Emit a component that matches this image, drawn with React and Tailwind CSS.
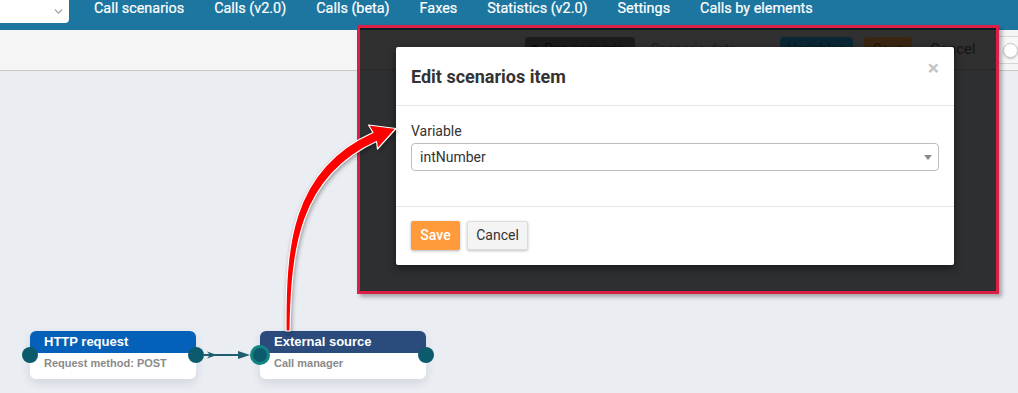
import React from "react";
import { ChevronDown } from "lucide-react";

const navItems = [
  "Call scenarios",
  "Calls (v2.0)",
  "Calls (beta)",
  "Faxes",
  "Statistics (v2.0)",
  "Settings",
  "Calls by elements",
];

const Node = ({ left, title, subtitle, headerClass, wideIn }) => (
  <div
    className="absolute top-[331px] w-[166px] h-[48px] rounded-[6px] bg-white shadow-[0_4px_10px_rgba(40,50,70,0.12)]"
    style={{ left }}
  >
    <div
      className={`h-[22px] rounded-t-[6px] pl-[14px] text-[13px] leading-[22px] font-bold text-white font-['Liberation_Sans',Arial,sans-serif] ${headerClass}`}
    >
      {title}
    </div>
    <div className="pl-[14px] pt-[3px] text-[11px] leading-[14px] font-bold text-[#8a8a8a] font-['Liberation_Sans',Arial,sans-serif]">
      {subtitle}
    </div>
    {wideIn ? (
      <div className="absolute left-[-10px] top-[14px] w-[20px] h-[20px] rounded-full bg-[#0b5b6d] border-[3px] border-[#168383]" />
    ) : (
      <div className="absolute left-[-8px] top-[16px] w-[16px] h-[16px] rounded-full bg-[#0b5b6d]" />
    )}
    <div className="absolute right-[-8px] top-[16px] w-[16px] h-[16px] rounded-full bg-[#0b5b6d]" />
  </div>
);

const App = () => {
  return (
    <div className="relative w-[1018px] h-[393px] overflow-hidden bg-[#eaedf2] font-['Roboto',sans-serif]">
      {/* top menu */}
      <nav className="h-[30px] bg-[#1d76a0] flex items-start">
        <div className="w-[69px] h-[23px] bg-white rounded-br-[4px] flex items-center justify-end pr-[4px]">
          <ChevronDown size={13} strokeWidth={2.5} className="text-[#a0a0a0]" />
        </div>
        <ul className="flex gap-[30px] ml-[25px] pt-[1px]">
          {navItems.map((item) => (
            <li
              key={item}
              className="text-[14.4px] leading-[16px] text-white whitespace-nowrap [-webkit-text-stroke:0.2px_white]"
            >
              {item}
            </li>
          ))}
        </ul>
      </nav>

      {/* toolbar */}
      <div className="h-[41px] bg-[#f5f5f5] border-b border-[#c9c9c9] flex items-center justify-end overflow-hidden">
        <div className="w-[30px] h-[28px] mr-[-5px] shrink-0 rounded-[4px] border border-[#d6d6d6] bg-[#f7f7f7] flex items-center pl-[9px]">
          <div className="w-[15px] h-[15px] rounded-full bg-white border border-[#c8c8c8] shadow-[0_1px_2px_rgba(0,0,0,0.2)]" />
        </div>
      </div>

      {/* scenario canvas */}
      <Node
        left={30}
        title="HTTP request"
        subtitle="Request method: POST"
        headerClass="bg-[#0460b8]"
      />
      <Node
        left={260}
        title="External source"
        subtitle="Call manager"
        headerClass="bg-[#2a4b7c]"
        wideIn
      />

      <svg
        className="absolute left-0 top-0 pointer-events-none"
        width="1018"
        height="393"
      >
        <line x1="204" y1="355" x2="246" y2="355" stroke="#1f5e6f" strokeWidth="2" />
        <polygon points="207,351.5 217,355 207,358.5 210,355" fill="#1f5e6f" />
        <polygon points="238,351 250,355 238,359" fill="#1f5e6f" />
      </svg>

      {/* screenshot inset with annotation frame */}
      <div className="absolute left-[357px] top-[25px] w-[642px] h-[269px] border-[3px] border-[#dc1f46] bg-[#2e2f31] shadow-[3px_3px_4px_rgba(0,0,0,0.3)] overflow-hidden">
        <div className="h-[2px] bg-[#0f1b22]" />
        <div className="h-[40px] bg-[#303030] border-b border-[#262626] flex items-center">
          <div className="ml-[165px] w-[110px] h-[25px] rounded-[4px] bg-[#1b1b1b] flex items-center pl-[5px] gap-[5px] text-[14px] text-[#0c0c0c]">
            <span className="w-[9px] h-[9px] rounded-full border-[2px] border-[#0c0c0c]" />
            Run scenario
          </div>
          <div className="w-[145px] pl-[16px] text-[14px] text-[#1e1e1e] whitespace-nowrap">
            Scenario data
          </div>
          <div className="w-[73px] h-[25px] rounded-[4px] bg-[#0b2735] text-[14px] text-[#071820] flex items-center justify-center">
            Variables
          </div>
          <div className="ml-[11px] w-[48px] h-[25px] rounded-[4px] bg-[#3a2511] text-[14px] text-[#1e1308] flex items-center justify-center">
            Save
          </div>
          <div className="ml-[18px] text-[15px] text-[#141414]">Cancel</div>
        </div>

        {/* modal */}
        <div className="absolute left-[36px] top-[19px] w-[558px] h-[218px] bg-white rounded-[2px] shadow-[0_3px_9px_rgba(0,0,0,0.5)]">
          <div className="h-[59px] px-[15px] flex items-center justify-between border-b border-[#e5e5e5]">
            <h4 className="text-[18px] font-bold text-[#333]">Edit scenarios item</h4>
            <span className="mb-[16px] text-[21px] leading-none font-bold text-[#c4c4c4]">
              ×
            </span>
          </div>
          <div className="h-[100px] px-[15px] pt-[15px]">
            <label className="block text-[14px] leading-[20px] text-[#333]">
              Variable
            </label>
            <div className="mt-[2px] h-[28px] rounded-[4px] border border-[#bdbdbd] flex items-center justify-between pl-[8px] pr-[6px] text-[14px] text-[#333]">
              <span>intNumber</span>
              <span className="w-0 h-0 border-l-[4px] border-r-[4px] border-t-[5px] border-l-transparent border-r-transparent border-t-[#8a8a8a]" />
            </div>
          </div>
          <div className="h-[59px] px-[15px] pt-[14px] border-t border-[#e5e5e5] flex items-start gap-[7px]">
            <button className="w-[49px] h-[29px] rounded-[2px] bg-[#ff9b3a] text-white text-[14px] font-medium shadow-[0_1px_3px_rgba(0,0,0,0.3)]">
              Save
            </button>
            <button className="w-[61px] h-[29px] rounded-[2px] bg-[#f4f4f4] border border-[#dcdcdc] text-[#333] text-[14px] shadow-[0_1px_3px_rgba(0,0,0,0.25)]">
              Cancel
            </button>
          </div>
        </div>
      </div>

      {/* red annotation arrow */}
      <svg
        className="absolute left-0 top-0 pointer-events-none drop-shadow-[1px_2px_2px_rgba(0,0,0,0.35)]"
        width="1018"
        height="393"
      >
        <path
          d="M 286 331 C 285.5 250, 289 170, 373 132.5 L 368.5 125 L 396 128.5 L 377.5 149 L 376.5 141.5 C 299 177, 291.5 250, 290 331 Z"
          fill="#ff0000"
          stroke="#ffffff"
          strokeWidth="1.2"
          strokeLinejoin="round"
        />
      </svg>
    </div>
  );
};

export default App;
